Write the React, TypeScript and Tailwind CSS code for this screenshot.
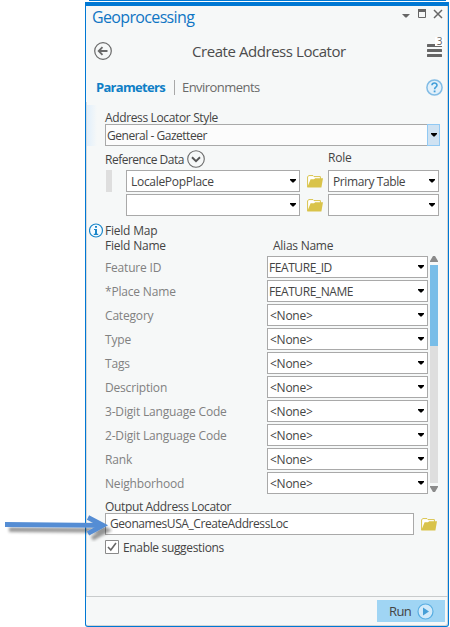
type SelectProps = {
  value?: string;
  className?: string;
  textClass?: string;
};

const Caret = ({ className = "" }: { className?: string }) => (
  <svg width="6" height="4" viewBox="0 0 6 4" className={`shrink-0 ${className}`}>
    <path d="M0 0h6v1L3.6 3.4H2.4L0 1z" fill="#000" />
  </svg>
);

const Select = ({ value, className = "", textClass = "pl-[3px]" }: SelectProps) => (
  <div
    className={`flex h-[22px] shrink-0 items-center justify-between border border-[#a9a9a9] bg-white pr-[3px] ${className}`}
  >
    <span className={`pt-[2px] ${textClass}`}>{value}</span>
    <Caret />
  </div>
);

const Folder = ({ className = "" }: { className?: string }) => (
  <svg width="17" height="13" viewBox="0 0 17 13" className={`shrink-0 ${className}`}>
    <path d="M.6 12V1.6L2 .6h4l1 1h6.4v2.6" fill="#fff" stroke="#d9c34a" />
    <path d="M3.6 4.2H7l1.2-1H16L14.4 12.4H.2z" fill="#d9c34a" />
  </svg>
);

const fields = [
  { name: "Feature ID", alias: "FEATURE_ID" },
  { name: "*Place Name", alias: "FEATURE_NAME" },
  { name: "Category", alias: "<None>" },
  { name: "Type", alias: "<None>" },
  { name: "Tags", alias: "<None>" },
  { name: "Description", alias: "<None>" },
  { name: "3-Digit Language Code", alias: "<None>" },
  { name: "2-Digit Language Code", alias: "<None>" },
  { name: "Rank", alias: "<None>" },
  { name: "Neighborhood", alias: "<None>" },
];

const Header = () => (
  <>
    <div className="flex h-[24px] items-start justify-between pl-[6px] pr-[5px]">
      <h1 className="text-[16px] leading-[22px] tracking-[-0.65px] text-[#0f75c4]">Geoprocessing</h1>
      <svg width="42" height="12" viewBox="0 0 42 12" className="mt-[2px]">
        <path d="M1 6h8L5.6 9.4H4.4z" fill="#666" />
        <path d="M17.500 2.500h7v7h-7z" fill="none" stroke="#666" />
        <path d="M17 1h8v3h-8z" fill="#666" />
        <path d="M33 2l8 8M41 2l-8 8" stroke="#666" strokeWidth="1.500" />
      </svg>
    </div>
    <div className="flex h-[42px] items-center pl-[8px] pr-[4px]">
      <svg width="18" height="18" viewBox="0 0 18 18">
        <circle cx="9" cy="9" r="8.300" fill="none" stroke="#6a6a6a" strokeWidth="1.200" />
        <path d="M13.500 9H5M8.500 5.200L4.700 9l3.800 3.800" fill="none" stroke="#6a6a6a" strokeWidth="1.800" />
      </svg>
      <h2 className="ml-[80px] whitespace-nowrap text-[15px] tracking-[-0.44px] text-[#4c4c4c]">
        Create Address Locator
      </h2>
      <div className="relative ml-auto mt-[5px] h-[22px] w-[17px] self-start">
        <svg width="15" height="14" viewBox="0 0 15 14" className="mt-[9px]">
          <path d="M1 1.500h13M1 6.500h13M1 11.500h13" stroke="#666" strokeWidth="3" strokeLinecap="round" />
        </svg>
        <span className="absolute right-0 top-[2px] h-[9px] w-[9px] bg-white text-center text-[10px] leading-[9px] text-[#666]">
          3
        </span>
      </div>
    </div>
    <div className="flex h-[30px] items-center pl-[10px] pr-[5px]">
      <span className="w-[78px] pt-[2px] text-[13px] font-bold tracking-[-0.7px] text-[#0f7fc6]">Parameters</span>
      <span className="h-[15px] w-px bg-[#a8a8a8]" />
      <span className="ml-[7px] pt-[2px] text-[13px] tracking-[-0.55px] text-[#6a6a6a]">Environments</span>
      <svg width="17" height="17" viewBox="0 0 17 17" className="ml-auto">
        <circle cx="8.500" cy="8.500" r="7.600" fill="#e2f0fa" stroke="#82bce5" strokeWidth="1.500" />
        <path
          d="M6 6.300C6 3.200 11 3.200 11 6.200c0 2-2.400 1.900-2.400 4"
          fill="none"
          stroke="#439fd9"
          strokeWidth="1.600"
        />
        <path d="M7.700 11.500h1.800v1.800H7.700z" fill="#439fd9" />
      </svg>
    </div>
  </>
);

const Inputs = () => (
  <div className="flex">
    <div className="mt-[3px] h-[41px] w-[10px] shrink-0 bg-linear-to-r from-[#e1effb] to-[#f6f8f8]" />
    <div className="w-[350px] pl-[8px]">
      <p className="mt-[7px] h-[15px] leading-[17px] tracking-[-0.36px]">Address Locator Style</p>
      <div className="flex h-[22px] w-[335px] items-center border border-[#a9a9a9] bg-[#fcfcfc]">
        <span className="grow pl-px pt-[2px] tracking-[-0.48px]">General - Gazetteer</span>
        <span className="-my-px -mr-px flex h-[22px] w-[13px] items-center justify-center border border-[#91c9f3] bg-[#cfe2f2]">
          <Caret />
        </span>
      </div>
      <div className="flex h-[24px] items-center">
        <span className="mt-[4px] w-[82px] whitespace-nowrap tracking-[-0.5px]">Reference Data</span>
        <svg width="18" height="18" viewBox="0 0 18 18" className="mt-[2px]">
          <circle cx="9" cy="9" r="8.300" fill="none" stroke="#6a6a6a" strokeWidth="1.100" />
          <path d="M5 7.300l4 3.900 4-3.900" fill="none" stroke="#555" strokeWidth="1.900" />
        </svg>
        <span className="ml-[123px] tracking-[-0.2px]">Role</span>
      </div>
      <div className="flex">
        <div className="ml-px mr-[14px] h-[22px] w-[6px] bg-[#dedede]" />
        <div className="flex flex-col gap-[2px]">
          <div className="flex items-center">
            <Select value="LocalePopPlace" className="w-[174px]" textClass="pl-[4px] tracking-[-0.3px]" />
            <Folder className="ml-[7px] mr-[4px]" />
            <Select value="Primary Table" className="w-[111px]" textClass="pl-[4px] tracking-[-0.4px]" />
          </div>
          <div className="flex items-center">
            <Select className="w-[174px]" />
            <Folder className="ml-[7px] mr-[4px]" />
            <Select className="w-[111px]" />
          </div>
        </div>
      </div>
    </div>
  </div>
);

const FieldMap = () => (
  <div className="mt-[6px]">
    <div className="flex h-[34px]">
      <svg width="15" height="15" viewBox="0 0 15 15" className="ml-[2px] mr-px mt-px">
        <circle cx="7" cy="7.500" r="6.500" fill="#f6fbff" stroke="#1b87c9" strokeWidth="1.200" />
        <path d="M6 3h2v1.700H6zM5 6h3v4.800h1.200V12H4.800v-1.200H6V7H5z" fill="#1b87c9" />
      </svg>
      <div className="w-[168px] pt-px leading-[15px] tracking-[-0.22px]">
        <p>Field Map</p>
        <p>Field Name</p>
      </div>
      <p className="mt-[16px] leading-[15px] tracking-[-0.25px]">Alias Name</p>
    </div>
    <div className="flex pl-[18px]">
      <div className="flex w-[323px] flex-col gap-[2px]">
        {fields.map((field) => (
          <div key={field.name} className="flex items-center">
            <span className="w-[162px] pt-[2px] tracking-[-0.18px] text-[#818181]">{field.name}</span>
            <Select
              value={field.alias}
              className="w-[161px]"
              textClass={field.alias === "<None>" ? "pl-[2px] tracking-[-0.25px]" : "pl-px tracking-[-0.43px]"}
            />
          </div>
        ))}
      </div>
      <div className="ml-[2px] flex w-[8px] flex-col items-center">
        <svg width="8" height="6" viewBox="0 0 8 6">
          <path d="M3 0h2l3 5v1H0V5z" fill="#8b8b8b" />
        </svg>
        <div className="mt-[3px] h-[218px] w-[8px] bg-[#dedede]">
          <div className="h-[81px] bg-[#78bde8]" />
        </div>
        <svg width="8" height="6" viewBox="0 0 8 6" className="mt-[3px]">
          <path d="M0 0h8v1L5 6H3L0 1z" fill="#8b8b8b" />
        </svg>
      </div>
    </div>
  </div>
);

const Output = () => (
  <div className="mt-[4px] h-[98px] pl-[18px]">
    <p className="h-[15px] leading-[17px] tracking-[-0.35px]">Output Address Locator</p>
    <div className="flex items-center">
      <div className="flex h-[22px] w-[309px] items-center border border-[#a9a9a9] bg-white pl-[4px] tracking-[-0.43px]">
        GeonamesUSA_CreateAddressLoc
      </div>
      <Folder className="ml-[7px]" />
    </div>
    <div className="mt-[5px] flex h-[14px] items-center">
      <svg width="14" height="14" viewBox="0 0 14 14">
        <path d="M.5.500h13v13H.5z" fill="#fff" stroke="#8a8a8a" />
        <path d="M3 7l2.800 3L11 3" fill="none" stroke="#666" strokeWidth="1.600" />
      </svg>
      <span className="ml-[4px] pt-[2px] tracking-[-0.34px]">Enable suggestions</span>
    </div>
  </div>
);

export default function App() {
  return (
    <div className="relative h-[627px] w-[450px] overflow-hidden bg-white font-['Open_Sans',sans-serif] text-[12px] text-[#444]">
      <div className="ml-[89px] h-px w-[357px] bg-[#0078d4]" />
      <div className="ml-[85px] mt-px flex h-[625px] w-[364px] flex-col rounded-b-[3px] border-x border-b border-t-4 border-[#0078d4] bg-[#f6f8f8] shadow-[inset_-1px_-1px_#d2d5d6]">
        <Header />
        <div className="border-l border-[#d7dadb]">
          <Inputs />
          <FieldMap />
          <Output />
        </div>
        <div className="flex grow items-start justify-end border-t border-[#c8cbcc] pr-[3px] pt-[3px]">
          <button className="flex h-[22px] w-[68px] items-center bg-[#a0d5f4] pl-[12px]">
            <span className="w-[28px] pt-[2px] text-left text-[13px] tracking-[-0.6px]">Run</span>
            <svg width="17" height="17" viewBox="0 0 17 17">
              <circle cx="8.500" cy="8.500" r="7.500" fill="#d2eafa" stroke="#59aee2" strokeWidth="1.200" />
              <path d="M6 4.500l6 4-6 4z" fill="#479fd7" />
            </svg>
          </button>
        </div>
      </div>
      <svg width="116" height="42" viewBox="0 0 116 42" className="absolute left-0 top-[508px]">
        <defs>
          <filter id="soft" x="-10%" y="-30%" width="120%" height="180%">
            <feDropShadow dx="4" dy="5" stdDeviation="1.500" floodColor="#000" floodOpacity=".4" />
          </filter>
        </defs>
        <g filter="url(#soft)" fill="none" stroke="#548dd4" strokeWidth="4.800">
          <path d="M5 16.500L103 17.300" />
          <path d="M88 9.500L103 17.300L88 25.500" />
        </g>
      </svg>
    </div>
  );
}
